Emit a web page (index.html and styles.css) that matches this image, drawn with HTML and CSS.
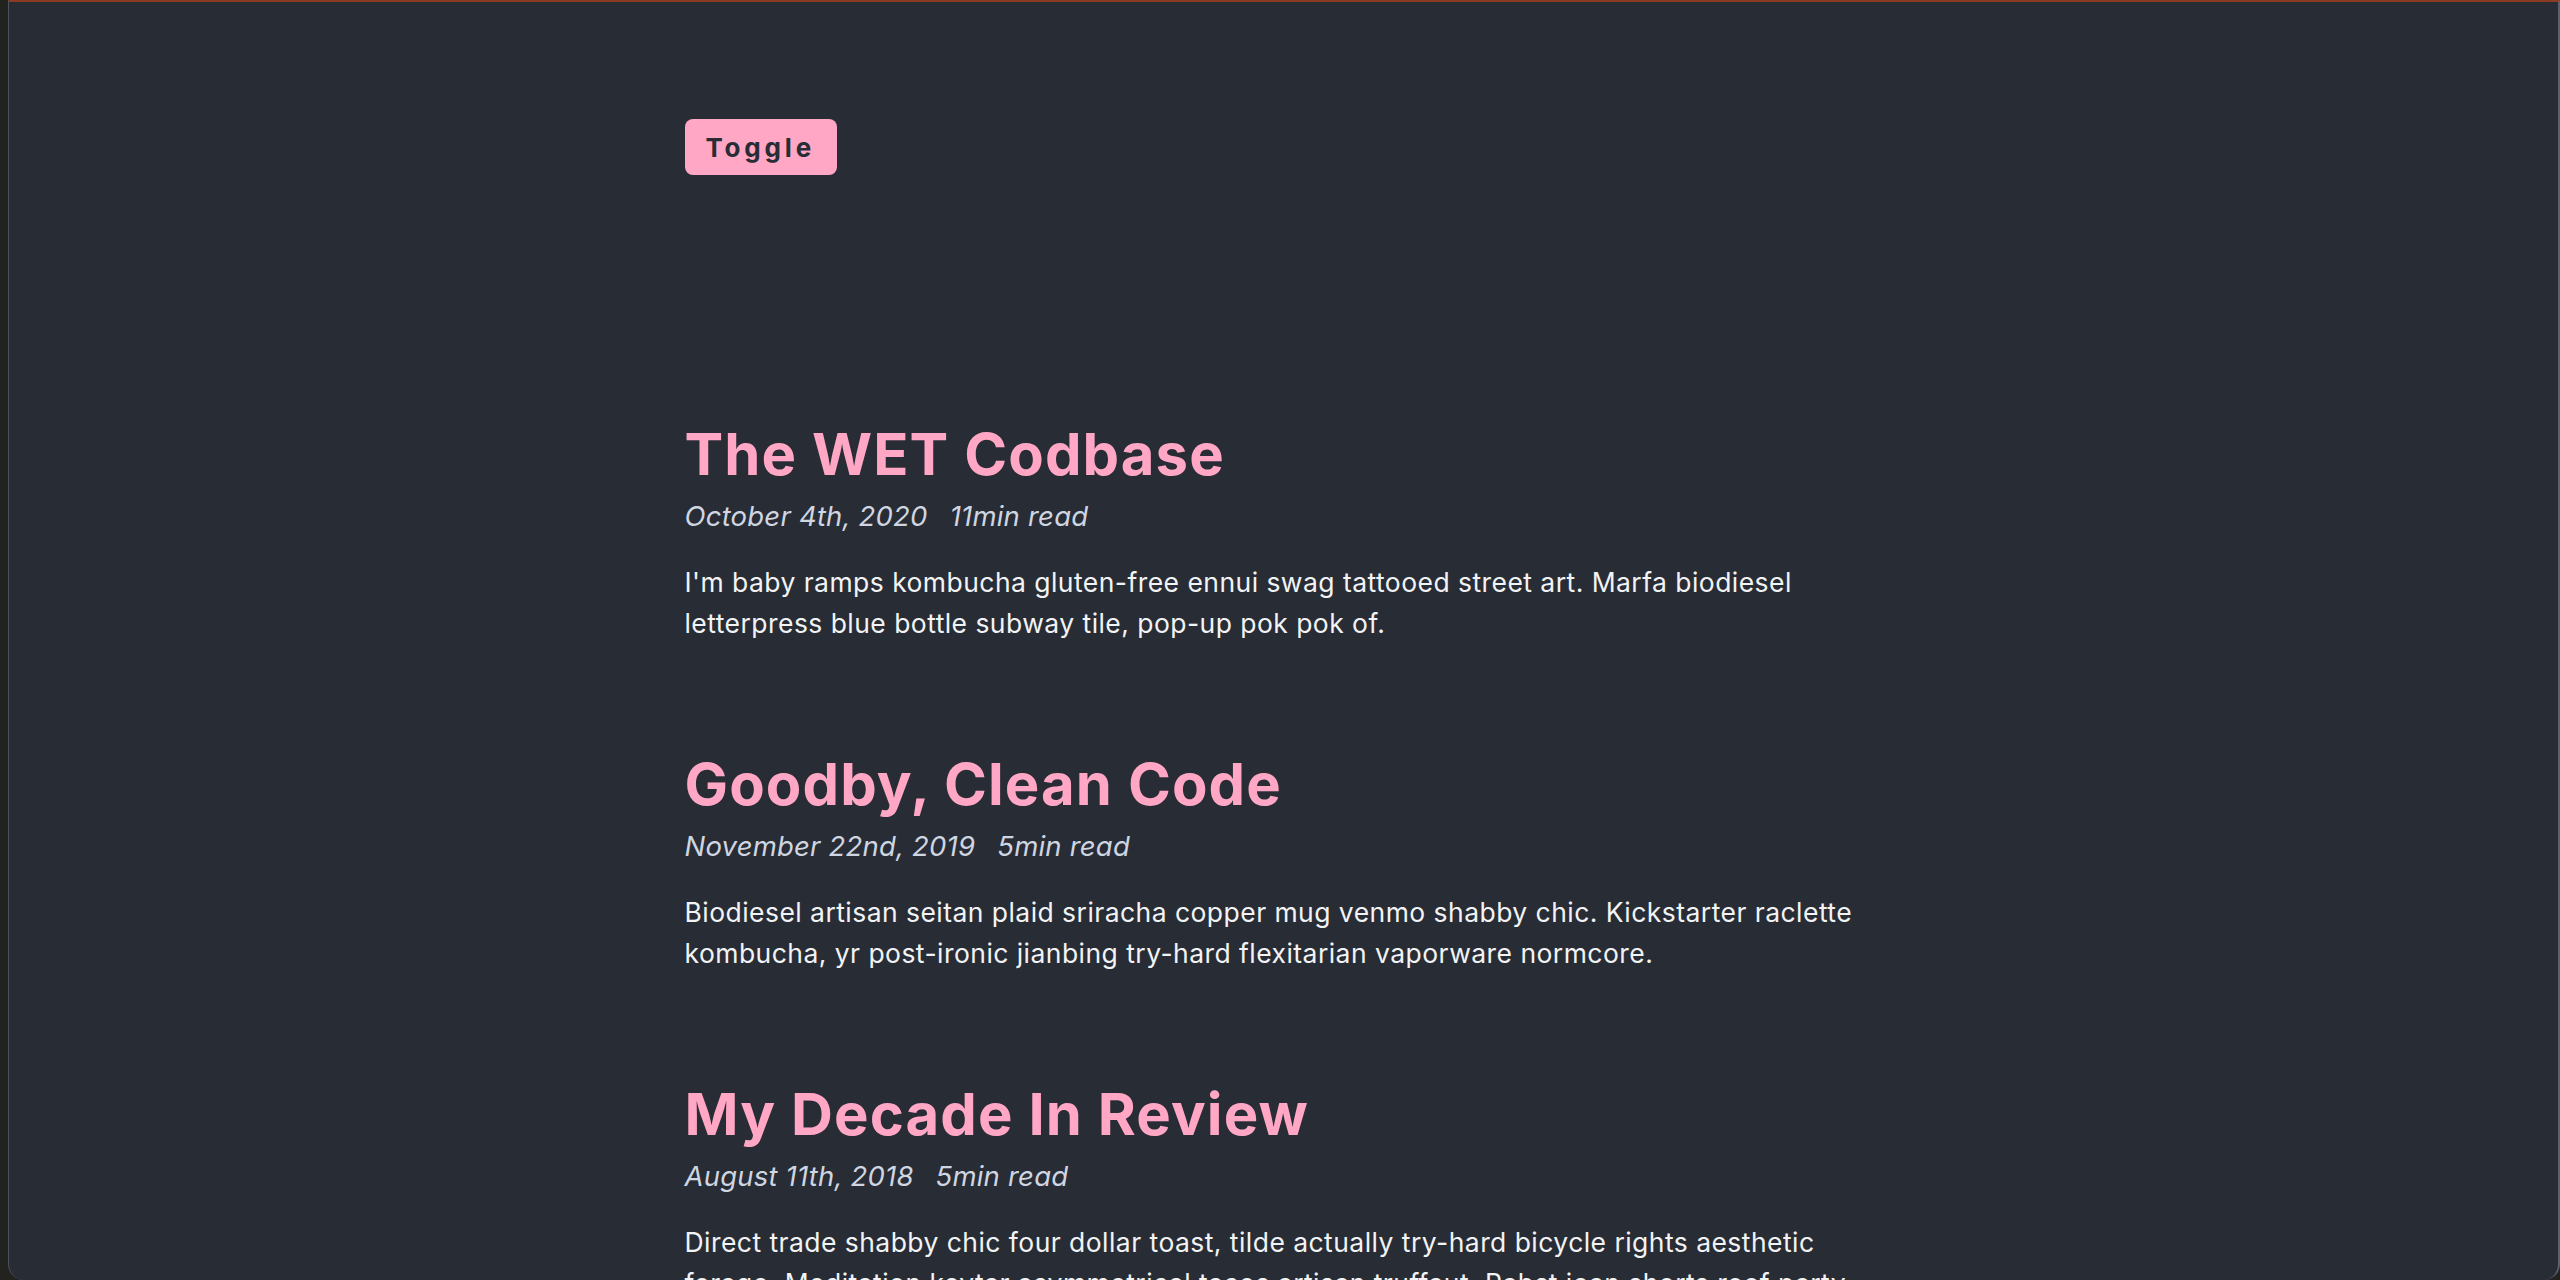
FILE: index.html
```html
<!DOCTYPE html>
<html lang="en">
<head>
<meta charset="utf-8">
<title>Blog</title>
<link rel="stylesheet" href="styles.css">
</head>
<body>
<div class="window">
  <main class="container">
    <button class="toggle" type="button">Toggle</button>
    <section class="posts">
      <article class="post">
        <h2 class="post-title">The WET Codbase</h2>
        <p class="post-meta"><span>October 4th, 2020</span><span>11min read</span></p>
        <p class="post-excerpt">I'm baby ramps kombucha gluten-free ennui swag tattooed street art. Marfa biodiesel letterpress blue bottle subway tile, pop-up pok pok of.</p>
      </article>
      <article class="post">
        <h2 class="post-title">Goodby, Clean Code</h2>
        <p class="post-meta"><span>November 22nd, 2019</span><span>5min read</span></p>
        <p class="post-excerpt">Biodiesel artisan seitan plaid sriracha copper mug venmo shabby chic. Kickstarter raclette kombucha, yr post-ironic jianbing try-hard flexitarian vaporware normcore.</p>
      </article>
      <article class="post">
        <h2 class="post-title">My Decade In Review</h2>
        <p class="post-meta"><span>August 11th, 2018</span><span>5min read</span></p>
        <p class="post-excerpt">Direct trade shabby chic four dollar toast, tilde actually try-hard bicycle rights aesthetic forage. Meditation keytar asymmetrical tacos artisan truffaut. Pabst jean shorts roof party.</p>
      </article>
    </section>
  </main>
</div>
</body>
</html>
```
FILE: styles.css
```css
html, body {
  margin: 0;
  padding: 0;
}

body {
  background: #22231f;
  height: 1280px;
  overflow: hidden;
  font-family: Inter, "Noto Sans", sans-serif;
}

.window {
  margin-left: 8px;
  height: 1280px;
  box-sizing: border-box;
  background: #282c35;
  border-top: 2px solid #8b3b22;
  border-left: 1px solid #4d5261;
  border-right: 2px solid #5b606c;
  border-bottom-left-radius: 16px;
  border-bottom-right-radius: 16px;
  overflow: hidden;
}

.container {
  max-width: 1198px;
  margin: 0 auto;
  padding-top: 117px;
}

.toggle {
  display: block;
  height: 56px;
  padding: 0 22px 0 21px;
  border: none;
  border-radius: 8px;
  background: #ffa7c4;
  color: #282c35;
  font-family: Inter, "Noto Sans", sans-serif;
  font-size: 26px;
  font-weight: 700;
  letter-spacing: 3.8px;
  cursor: pointer;
}

.posts {
  display: flex;
  flex-direction: column;
  gap: 108px;
  margin-top: 247px;
}

.post-title {
  margin: 0;
  font-size: 58px;
  line-height: 64px;
  font-weight: 700;
  letter-spacing: 1.1px;
  color: #ffa7c4;
}

.post-meta {
  display: flex;
  gap: 22px;
  margin: 10px 0 0;
  font-size: 27.5px;
  line-height: 40px;
  font-style: italic;
  letter-spacing: 0.2px;
  color: #cfd6e1;
}

.post-excerpt {
  margin: 26px 0 0;
  font-size: 26.5px;
  line-height: 41px;
  letter-spacing: 0.45px;
  color: #f2f3f5;
}
```
